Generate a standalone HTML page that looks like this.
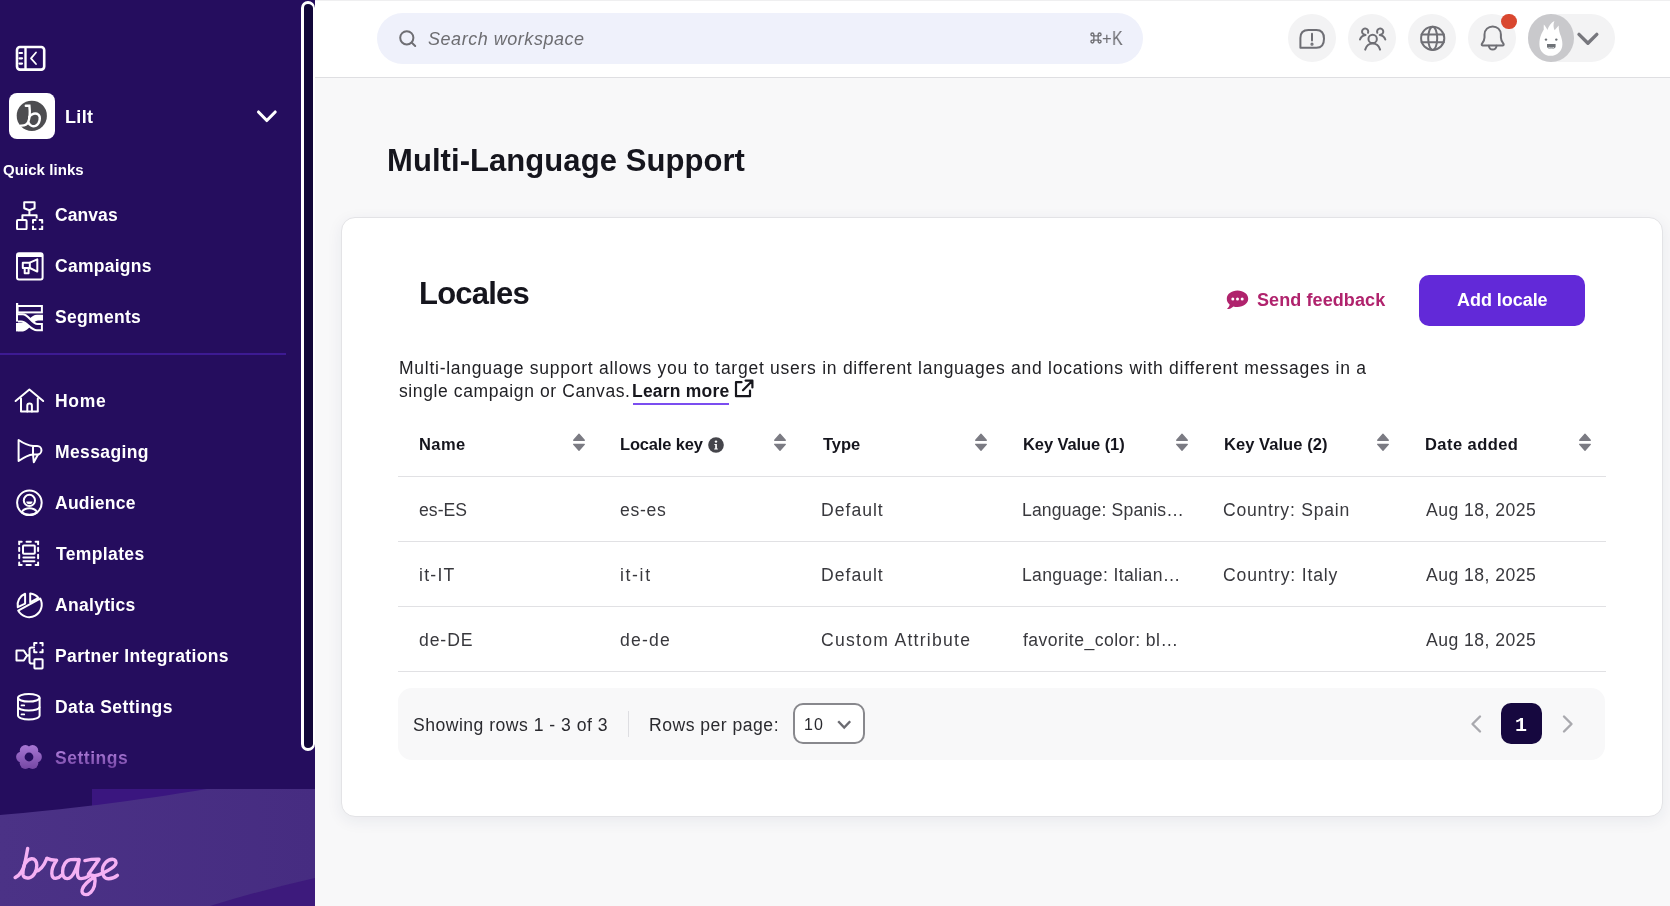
<!DOCTYPE html>
<html><head><meta charset="utf-8">
<style>
*{box-sizing:border-box;margin:0;padding:0}
html,body{width:1670px;height:906px;overflow:hidden;background:#f8f8f9;font-family:"Liberation Sans",sans-serif;position:relative}
.abs{position:absolute}
#sb{position:absolute;left:0;top:0;width:315px;height:906px;background:#250d5e;overflow:hidden}
.nav{position:absolute;left:55px;color:#fff;font-weight:700;font-size:17.5px;white-space:nowrap;line-height:1;letter-spacing:0.3px}
#hdr{position:absolute;left:315px;top:0;width:1355px;height:78px;background:#fff;border-top:1px solid #efeff0;border-bottom:1px solid #dfdfe2}
.txt{position:absolute;white-space:nowrap;line-height:1;-webkit-font-smoothing:antialiased;will-change:transform}
</style></head><body>
<div id="sb">
<!-- collapse icon -->
<svg class="abs" style="left:14px;top:44px" width="34" height="30" viewBox="0 0 34 30" fill="none" stroke="#fff">
 <rect x="3" y="3" width="27.2" height="22.6" rx="3" stroke-width="2.6"/>
 <line x1="11.5" y1="3" x2="11.5" y2="25.6" stroke-width="2.4"/>
 <line x1="5.5" y1="9" x2="8" y2="9" stroke-width="2.2" stroke-linecap="round"/>
 <line x1="5.5" y1="14.3" x2="8" y2="14.3" stroke-width="2.2" stroke-linecap="round"/>
 <line x1="5.5" y1="19.6" x2="8" y2="19.6" stroke-width="2.2" stroke-linecap="round"/>
 <path d="M22 8.5 L17 14.3 L22 20" stroke-width="1.8" stroke-linecap="round" stroke-linejoin="round"/>
</svg>
<!-- logo -->
<div class="abs" style="left:9px;top:93px;width:46px;height:46px;background:#fff;border-radius:8px"></div>
<svg class="abs" style="left:8px;top:92px" width="48" height="48" viewBox="0 0 48 48">
 <circle cx="23.8" cy="23.8" r="15.1" fill="#4d4d50"/>
 <path d="M17.8 13.8 H21.4 C22 19 21.8 26 20.2 30 C18.8 33 16 33.8 12.8 33.6" fill="none" stroke="#fff" stroke-width="2.4" stroke-linecap="round"/>
 <path d="M21.2 25 C23 21.5 27.8 20.6 30.4 22.6 C33 25 31.8 31.8 28 33.6 C24.8 35.2 21.5 33.5 20.4 30.5" fill="none" stroke="#fff" stroke-width="2.4" stroke-linecap="round"/>
</svg>
<svg class="abs" style="left:254px;top:106.5px" width="26" height="20" viewBox="0 0 26 20" fill="none" stroke="#fff" stroke-width="3.1" stroke-linecap="round" stroke-linejoin="round">
 <path d="M4.5 5 L12.8 13.5 L21.2 5"/>
</svg>

<!-- quick links -->
<svg class="abs" style="left:16px;top:201px" width="28" height="29" viewBox="0 0 28 29" fill="none" stroke="#fff" stroke-width="2" stroke-linejoin="round">
 <path d="M8.2 1.2 H18.6 V7.2 L13.4 9.2 L8.2 7.2 Z"/>
 <path d="M13.4 9.2 V14.3 M6.4 18.4 V14.3 H20.6 V17.6"/>
 <rect x="1" y="19" width="9.6" height="9.2" rx="1"/>
 <path d="M17 22.4 V19 H20.4 M22.8 19 H26.2 V22.4 M26.2 24.8 V28.2 H22.8 M20.4 28.2 H17 V24.8"/>
</svg>

<svg class="abs" style="left:15.5px;top:252px" width="28" height="29" viewBox="0 0 28 29" fill="none" stroke="#fff" stroke-width="2" stroke-linejoin="round">
 <rect x="1" y="1.2" width="25.6" height="26.2" rx="2"/>
 <line x1="1" y1="3.4" x2="26.6" y2="3.4" stroke-width="3.2"/>
 <rect x="6.8" y="10.7" width="7" height="5.3"/>
 <rect x="8.7" y="16" width="3.9" height="5.3"/>
 <path d="M13.8 10.7 L21.3 7.4 V19.6 L13.8 16"/>
</svg>

<svg class="abs" style="left:16px;top:303px" width="28" height="29" viewBox="0 0 28 29">
 <rect x="0" y="0" width="2.2" height="18.6" fill="#fff"/>
 <rect x="0" y="20" width="2.2" height="8.4" fill="#fff"/>
 <rect x="1.5" y="3" width="24.4" height="6.4" fill="none" stroke="#fff" stroke-width="2"/>
 <path d="M2 20 H6 C12 20 15 11.8 21 11.8 H27 V17.6 H22 C16.5 17.6 13 28.4 7 28.4 H2 Z" fill="#fff"/>
 <path d="M2 11.2 H6.5 C13 11.2 15.5 21 21.5 21 H25.9 V27.2 H21 C14 27.2 11.5 18.6 5 18.6 H2" fill="#250d5e" stroke="#fff" stroke-width="2"/>
</svg>

<div class="abs" style="left:0;top:353px;width:286px;height:2px;background:#3d1a93"></div>

<!-- main nav -->
<svg class="abs" style="left:14px;top:387px" width="32" height="28" viewBox="14 387 32 28" fill="none" stroke="#fff" stroke-width="2" stroke-linecap="round" stroke-linejoin="round">
 <path d="M15.6 401 L29.4 389.6 L43.2 401"/>
 <path d="M21 398.5 V411.6 H37.8 V398.5"/>
 <path d="M27.3 411.6 V405.8 A2.3 2.3 0 0 1 31.9 405.8 V411.6"/>
</svg>

<svg class="abs" style="left:14px;top:436px" width="32" height="30" viewBox="14 436 32 30" fill="none" stroke="#fff" stroke-width="2" stroke-linejoin="round">
 <path d="M18.6 440 V461 C23 458 27.5 455 33 454.5 V446 C27.5 445.5 23 443 18.6 440 Z"/>
 <path d="M33 446 H37.2 A4.2 4.2 0 0 1 37.2 454.5 H33"/>
 <path d="M33 454.5 L33.8 462.2 L38 454.5"/>
</svg>

<svg class="abs" style="left:14px;top:488px" width="32" height="30" viewBox="14 488 32 30" fill="none" stroke="#fff" stroke-width="2">
 <circle cx="29.4" cy="502.8" r="12.3"/>
 <circle cx="29.4" cy="500.4" r="5.6"/>
 <path d="M26.3 501.6 H32.5 A3.1 2.6 0 0 1 26.3 501.6 Z" fill="#fff" stroke="none"/>
 <path d="M21.6 512.4 C23 509.6 26 508.2 29.4 508.2 C32.8 508.2 35.8 509.6 37.2 512.4"/>
 <path d="M21.6 512.4 C24 514 26.5 514.8 29.4 514.8 C32.3 514.8 34.8 514 37.2 512.4"/>
</svg>

<svg class="abs" style="left:14px;top:538px" width="32" height="30" viewBox="14 538 32 30" fill="none" stroke="#fff" stroke-width="2" stroke-linecap="round">
 <path d="M19.2 544.2 V541.7 H21.7 M26.5 541.7 H30.8 M35.6 541.7 H38.1 V544.2 M38.1 547.8 V551 M38.1 554.8 V558.2 M38.1 562.4 V564.9 H35.6 M30.8 564.9 H26.5 M21.7 564.9 H19.2 V562.4 M19.2 558.2 V554.8 M19.2 551 V547.8"/>
 <rect x="23" y="545.4" width="11.8" height="8.4" rx="0.8"/>
 <path d="M23.4 557.6 H34.4 M23.4 561.2 H34.4"/>
</svg>

<svg class="abs" style="left:14px;top:590px" width="32" height="30" viewBox="14 590 32 30" fill="none" stroke="#fff" stroke-width="2" stroke-linejoin="round">
 <path d="M18.2 610.6 L40.2 598.6 A12 12 0 1 1 18.2 610.6 Z"/>
 <path d="M30.2 593.4 V602.4 L38.4 597.8 A11.8 11.8 0 0 0 30.2 593.4 Z"/>
 <path d="M25.1 593.8 V603.6 L17.8 607.2 A11.8 11.8 0 0 1 25.1 593.8 Z"/>
</svg>

<svg class="abs" style="left:14px;top:640px" width="32" height="32" viewBox="14 640 32 32" fill="none" stroke="#fff" stroke-width="2" stroke-linejoin="round" stroke-linecap="round">
 <path d="M16.5 650.6 H23.8 L27 655.5 L23.8 660.5 H16.5 Z"/>
 <path d="M27 655.5 H28.5 M34 647.5 H31.5 Q29.5 647.5 29.5 649.5 V661.5 Q29.5 663.6 31.5 663.6 H34"/>
 <path d="M34.2 645.4 V643 H36.6 M40.2 643 H42.6 V645.4 M42.6 649.8 V652.2 H40.2 M36.6 652.2 H34.2 V649.8"/>
 <rect x="34.4" y="659.2" width="8.2" height="9.2" rx="0.6"/>
</svg>

<svg class="abs" style="left:14px;top:690px" width="32" height="32" viewBox="14 690 32 32" fill="none" stroke="#fff" stroke-width="2">
 <ellipse cx="28.8" cy="697.8" rx="10.8" ry="3.8"/>
 <path d="M18 697.8 V715.6 C18 717.8 22.8 719.6 28.8 719.6 C34.8 719.6 39.6 717.8 39.6 715.6 V697.8"/>
 <path d="M18 706.8 C18 709 22.8 710.6 28.8 710.6 C34.8 710.6 39.6 709 39.6 706.8"/>
 <path d="M21.5 705.4 H24.2 M21.5 714.4 H24.2" stroke-linecap="round" stroke-width="1.8"/>
</svg>

<svg class="abs" style="left:15px;top:743.3px" width="28" height="28" viewBox="0 0 28 28">
 <defs><linearGradient id="gg" gradientUnits="userSpaceOnUse" x1="0" y1="2" x2="0" y2="26"><stop offset="0" stop-color="#a877d4"/><stop offset="1" stop-color="#7447a3"/></linearGradient>
 <mask id="gm"><rect width="28" height="28" fill="#fff"/><circle cx="14" cy="14" r="4.4" fill="#000"/></mask></defs>
 <g fill="url(#gg)" mask="url(#gm)"><circle cx="14" cy="14" r="9.5"/><circle cx="21.30" cy="14.00" r="5.6"/><circle cx="17.65" cy="20.32" r="5.6"/><circle cx="10.35" cy="20.32" r="5.6"/><circle cx="6.70" cy="14.00" r="5.6"/><circle cx="10.35" cy="7.68" r="5.6"/><circle cx="17.65" cy="7.68" r="5.6"/></g>
</svg>

<!-- bottom decoration -->
<svg class="abs" style="left:0;top:780px" width="315" height="126" viewBox="0 780 315 126">
 <defs><linearGradient id="band" x1="0" y1="0" x2="1" y2="0"><stop offset="0" stop-color="#4b3286"/><stop offset="1" stop-color="#462c81"/></linearGradient></defs>
 <path d="M92 789 H315 V906 H92 Z" fill="#3a167f"/>
 <path d="M0 815 C60 810 135 801 207 789 H315 V906 H0 Z" fill="url(#band)"/>
 <path d="M210 906 C245 895 280 886 315 878 V906 Z" fill="#3d1a7c"/>
</svg>
<svg class="abs" style="left:10px;top:840px" width="120" height="60" viewBox="10 840 120 60" fill="none" stroke="#f5b1f4" stroke-width="3.4" stroke-linecap="round" stroke-linejoin="round">
 <path d="M15.1 877.6 C19.6 875.4 23 870.5 24.6 864 C25.8 859 26.8 853 27.7 848.4"/>
 <path d="M25.4 861.6 C23.6 867 22.6 871.8 23 874.8 C23.5 877.4 26 878.4 29.4 877.8 C33.6 877 36.8 871.2 36.8 865.4 C36.8 860.8 34.6 858.6 31.6 858.8 C28.6 859 26.8 861 25.6 863"/>
 <path d="M35.8 871.4 C40 870.6 44 865.6 46.9 858.4"/>
 <path d="M46.9 858.4 C50 859.9 53.4 860.4 56.6 860.3 C53.6 864.6 51.6 869.2 51.8 873.6 C52 877 53.6 878.6 55.8 878.3 C58.2 878 60.6 876.4 62.2 874.6"/>
 <path d="M79.2 859.6 C76.5 859.4 73.6 859.4 70.7 859.6 C66 860 62.6 865.6 62.6 871.6 C62.6 876 64.4 878.6 67.2 878.6 C70.8 878.6 73.6 874 75.4 869.8 C77 866 78.4 862.4 79.2 859.6 C78 865 77.2 869.6 77.4 873.6 C77.6 877.4 79 878.8 81.2 878.6 C84 878.4 86.4 877.6 89 876"/>
 <path d="M84.9 860.6 C89.5 859.6 94.4 859 99 859.2 C95.5 864.4 91.6 869.6 88.4 874.2 C91 875.2 93 875.6 94.6 875.6 C97 875.6 99.5 874.8 101.8 873.6"/>
 <path d="M94.6 875.8 C95.2 879 95.4 882.6 94.4 886 C93 891 89.2 894.6 86 894.6 C83 894.6 81.4 892.4 82.2 889.6 C83.4 885.6 88 881 94.6 876.8"/>
 <path d="M101.8 873.6 C107.2 871 113 868.4 115.4 864.6 C116.8 862 115.4 859.2 112.4 859.2 C107.2 859.2 102.6 864.4 102.4 870.2 C102.2 875.6 104.6 878.8 108.6 878.8 C111.8 878.8 115 877.4 117.4 875.4"/>
</svg>
<!-- scrollbar -->
<div class="abs" style="left:301px;top:1px;width:14px;height:750px;background:#12073a;border:3px solid #fff;border-left-width:3px;border-right-width:2px;border-radius:7px"></div>
</div>
<div id="hdr"></div>
<!-- search -->
<div class="abs" style="left:377px;top:13px;width:766px;height:51px;border-radius:25.5px;background:#eff1fb"></div>
<svg class="abs" style="left:396px;top:26.5px" width="24" height="24" viewBox="396 27 24 24" fill="none" stroke="#6e6e73" stroke-width="2" stroke-linecap="round">
 <circle cx="406.8" cy="37.8" r="6.6"/>
 <path d="M411.6 42.6 L415.2 46"/>
</svg>
<svg class="abs" style="left:1089.7px;top:31.8px" width="12" height="12" viewBox="0 0 14 14" fill="none" stroke="#6e6e73" stroke-width="1.6">
 <path d="M4.5 4.5 H9.5 V9.5 H4.5 Z M4.5 4.5 V2.8 A1.7 1.7 0 1 0 2.8 4.5 H4.5 M9.5 4.5 H11.2 A1.7 1.7 0 1 0 9.5 2.8 V4.5 M9.5 9.5 V11.2 A1.7 1.7 0 1 0 11.2 9.5 H9.5 M4.5 9.5 H2.8 A1.7 1.7 0 1 0 4.5 11.2 V9.5"/>
</svg>

<!-- header icons -->
<div class="abs" style="left:1288px;top:14px;width:48px;height:48px;border-radius:50%;background:#f3f3f4"></div>
<div class="abs" style="left:1348px;top:14px;width:48px;height:48px;border-radius:50%;background:#f3f3f4"></div>
<div class="abs" style="left:1408px;top:14px;width:48px;height:48px;border-radius:50%;background:#f3f3f4"></div>
<div class="abs" style="left:1468px;top:14px;width:48px;height:48px;border-radius:50%;background:#f3f3f4"></div>
<div class="abs" style="left:1528px;top:14px;width:87px;height:48px;border-radius:24px;background:#f3f3f4"></div>
<svg class="abs" style="left:1280px;top:10px" width="340" height="60" viewBox="1280 10 340 60" fill="none" stroke="#6f6f75" stroke-width="2" stroke-linecap="round" stroke-linejoin="round">
 <!-- feedback bubble -->
 <path d="M1300.4 47.8 V38 C1300.4 33 1303.4 30 1308.4 30 H1316.4 C1321.4 30 1324 33 1324 38.8 C1324 44.6 1321.4 47.8 1316.4 47.8 Z"/>
 <path d="M1312 33.8 V40.4"/><circle cx="1312" cy="44.2" r="0.6" fill="#6f6f75"/>
 <!-- people -->
 <circle cx="1372.66" cy="38.9" r="4.2"/>
 <path d="M1365.2 49.6 C1366.4 45.8 1369.2 43.6 1372.66 43.6 C1376.1 43.6 1378.9 45.8 1380.1 49.6"/>
  <path d="M1368 32.8 A3.1 3.1 0 1 0 1365.1 34.7 M1365.6 34.9 C1362.8 35.2 1360.7 37 1360 39.6"/>
 <path d="M1377.32 32.8 A3.1 3.1 0 1 1 1380.22 34.7 M1379.72 34.9 C1382.5 35.2 1384.6 37 1385.3 39.6"/>
 <!-- globe -->
 <circle cx="1432.7" cy="38.3" r="11.6"/>
 <ellipse cx="1432.7" cy="38.3" rx="4.5" ry="11.6"/>
 <path d="M1421.6 34.4 H1443.8 M1421.6 42.2 H1443.8"/>
 <!-- bell -->
 <path d="M1482.6 45.4 H1502.8 C1503.8 45.4 1504 44.4 1503.2 43.4 C1501.8 41.6 1500.9 40 1500.9 37.6 V34.6 C1500.9 29.6 1497.1 26.4 1492.7 26.4 C1488.3 26.4 1484.5 29.6 1484.5 34.6 V37.6 C1484.5 40 1483.6 41.6 1482.2 43.4 C1481.4 44.4 1481.6 45.4 1482.6 45.4 Z"/>
 <path d="M1488.9 45.8 A3.8 3.8 0 0 0 1496.5 45.8"/>
</svg>
<div class="abs" style="left:1501px;top:13.5px;width:15.5px;height:15.5px;border-radius:50%;background:#d9472f"></div>
<div class="abs" style="left:1528px;top:14px;width:45.5px;height:48px;border-radius:50%;background:#c9c9cc"></div>
<svg class="abs" style="left:1528px;top:14px" width="90" height="48" viewBox="1528 14 90 48">
 <path d="M1550.5 55.8 C1544 55.8 1539.4 51 1539.4 44.2 C1539.4 37.5 1541.6 33.5 1543.8 29.6 C1543.6 27.5 1543.8 25.8 1543.8 24.6 C1545.4 26.4 1546.6 28 1547.4 30 C1548.6 26 1551 22.6 1554.4 20.9 C1553 24 1553.4 27.6 1554.6 30.2 C1556 28.6 1557.6 27 1558.7 25.5 C1558.8 28.5 1559 31 1560 34 C1561.6 37.5 1562.4 41 1562.4 44.2 C1562.4 51 1557 55.8 1550.5 55.8 Z" fill="#fff"/>
 <circle cx="1546" cy="39.6" r="1.2" fill="#6f7378"/><circle cx="1556.3" cy="39.6" r="1.2" fill="#6f7378"/>
 <path d="M1547 44 H1555.6 V46.4 C1555.6 48 1554 48.8 1551.3 48.8 C1548.6 48.8 1547 48 1547 46.4 Z" fill="#6f7378"/>
 <path d="M1548.6 47.4 C1549.6 48.4 1553 48.4 1554 47.4" stroke="#d8dbdd" stroke-width="1.2" fill="none"/>
 <path d="M1579 34.4 L1587.9 43.2 L1596.8 34.4" fill="none" stroke="#77777d" stroke-width="3.4" stroke-linecap="round" stroke-linejoin="round"/>
</svg>

<!-- title -->

<!-- card -->
<div class="abs" style="left:341px;top:217px;width:1321.5px;height:599.5px;background:#fff;border:1px solid #e3e3e6;border-radius:14px;box-shadow:0 4px 16px rgba(30,40,90,0.07)"></div>

<svg class="abs" style="left:1225px;top:288px" width="26" height="24" viewBox="0 0 26 24">
 <path d="M12.5 2.6 C18.6 2.6 23.2 6.2 23.2 10.8 C23.2 15.4 18.6 19 12.5 19 C11 19 9.6 18.8 8.4 18.4 C6.6 20.2 4 21.2 2 21 C3.6 19.6 4.4 18.2 4.6 16.6 C2.8 15.1 1.8 13.1 1.8 10.8 C1.8 6.2 6.4 2.6 12.5 2.6 Z" fill="#b0236d"/>
 <circle cx="7.8" cy="10.9" r="1.5" fill="#fff"/><circle cx="12.5" cy="10.9" r="1.5" fill="#fff"/><circle cx="17.2" cy="10.9" r="1.5" fill="#fff"/>
</svg>
<div class="abs" style="left:1419px;top:274.5px;width:166px;height:51px;border-radius:10px;background:#6229d8"></div>

<div class="abs" style="left:633px;top:402.6px;width:96px;height:2px;background:#7b4df0"></div>
<svg class="abs" style="left:732px;top:377px" width="24" height="24" viewBox="0 0 24 24" fill="none" stroke="#17171d" stroke-width="2.2" stroke-linecap="round" stroke-linejoin="round">
 <path d="M9.5 5.2 H4 V19.2 H18 V13.6"/>
 <path d="M11 13.2 L19.6 4.4 M13.6 3.6 H20.4 V10.4"/>
</svg>
<div class="abs" style="left:398px;top:476px;width:1208px;height:1px;background:#e1e1e4"></div>
<div class="abs" style="left:398px;top:541px;width:1208px;height:1px;background:#e1e1e4"></div>
<div class="abs" style="left:398px;top:606px;width:1208px;height:1px;background:#e1e1e4"></div>
<div class="abs" style="left:398px;top:671px;width:1208px;height:1px;background:#e1e1e4"></div>
<svg class="abs" style="left:572.5px;top:433px" width="13" height="19" viewBox="0 0 13 19"><path d="M6 1.3 L11.3 7.3 H0.7 Z M0.7 11.3 H11.3 L6 17.3 Z" fill="#7b7b83" stroke="#7b7b83" stroke-width="1.3" stroke-linejoin="round"/></svg>
<svg class="abs" style="left:773.7px;top:433px" width="13" height="19" viewBox="0 0 13 19"><path d="M6 1.3 L11.3 7.3 H0.7 Z M0.7 11.3 H11.3 L6 17.3 Z" fill="#7b7b83" stroke="#7b7b83" stroke-width="1.3" stroke-linejoin="round"/></svg>
<svg class="abs" style="left:974.9px;top:433px" width="13" height="19" viewBox="0 0 13 19"><path d="M6 1.3 L11.3 7.3 H0.7 Z M0.7 11.3 H11.3 L6 17.3 Z" fill="#7b7b83" stroke="#7b7b83" stroke-width="1.3" stroke-linejoin="round"/></svg>
<svg class="abs" style="left:1176.1px;top:433px" width="13" height="19" viewBox="0 0 13 19"><path d="M6 1.3 L11.3 7.3 H0.7 Z M0.7 11.3 H11.3 L6 17.3 Z" fill="#7b7b83" stroke="#7b7b83" stroke-width="1.3" stroke-linejoin="round"/></svg>
<svg class="abs" style="left:1377.3px;top:433px" width="13" height="19" viewBox="0 0 13 19"><path d="M6 1.3 L11.3 7.3 H0.7 Z M0.7 11.3 H11.3 L6 17.3 Z" fill="#7b7b83" stroke="#7b7b83" stroke-width="1.3" stroke-linejoin="round"/></svg>
<svg class="abs" style="left:1578.5px;top:433px" width="13" height="19" viewBox="0 0 13 19"><path d="M6 1.3 L11.3 7.3 H0.7 Z M0.7 11.3 H11.3 L6 17.3 Z" fill="#7b7b83" stroke="#7b7b83" stroke-width="1.3" stroke-linejoin="round"/></svg>
<svg class="abs" style="left:708px;top:437px" width="16" height="16" viewBox="0 0 16 16"><circle cx="8" cy="8" r="7.8" fill="#45454b"/><circle cx="8" cy="4.6" r="1.2" fill="#fff"/><path d="M6.4 7 H8.9 V11.6 H9.8 V12.6 H6.2 V11.6 H7.2 V8 H6.4 Z" fill="#fff"/></svg>

<div class="abs" style="left:398px;top:688px;width:1207px;height:72px;border-radius:14px;background:#f8f8f9"></div>
<div class="abs" style="left:627.5px;top:711px;width:1.5px;height:26px;background:#dedee2"></div>
<div class="abs" style="left:793px;top:703px;width:71.5px;height:41px;border-radius:10px;border:2px solid #88888d;background:#fff"></div>
<svg class="abs" style="left:834px;top:716.5px" width="20" height="16" viewBox="0 0 20 16" fill="none" stroke="#6b6b71" stroke-width="2.4" stroke-linecap="butt" stroke-linejoin="miter"><path d="M4.2 4.2 L10.2 10.6 L16.2 4.2"/></svg>
<svg class="abs" style="left:1466px;top:712px" width="20" height="24" viewBox="0 0 20 24" fill="none" stroke="#a9a9ae" stroke-width="2.4" stroke-linecap="round" stroke-linejoin="round"><path d="M14 4.5 L6.5 12 L14 19.5"/></svg>
<div class="abs" style="left:1501px;top:703px;width:41px;height:41px;border-radius:10px;background:#16083f"></div>
<svg class="abs" style="left:1558px;top:712px" width="20" height="24" viewBox="0 0 20 24" fill="none" stroke="#a9a9ae" stroke-width="2.4" stroke-linecap="round" stroke-linejoin="round"><path d="M6 4.5 L13.5 12 L6 19.5"/></svg>
<div class="txt" style="left:64.6px;top:108px;font-family:'Liberation Sans';font-size:18px;font-weight:700;color:#fff;letter-spacing:0.366px;font-style:normal;">Lilt</div>
<div class="txt" style="left:3.2px;top:162px;font-family:'Liberation Sans';font-size:15px;font-weight:700;color:#fff;letter-spacing:0.060px;font-style:normal;">Quick links</div>
<div class="txt" style="left:54.6px;top:207px;font-family:'Liberation Sans';font-size:17.5px;font-weight:700;color:#fff;letter-spacing:0.080px;font-style:normal;">Canvas</div>
<div class="txt" style="left:54.6px;top:258px;font-family:'Liberation Sans';font-size:17.5px;font-weight:700;color:#fff;letter-spacing:0.264px;font-style:normal;">Campaigns</div>
<div class="txt" style="left:54.6px;top:309px;font-family:'Liberation Sans';font-size:17.5px;font-weight:700;color:#fff;letter-spacing:0.314px;font-style:normal;">Segments</div>
<div class="txt" style="left:54.5px;top:393px;font-family:'Liberation Sans';font-size:17.5px;font-weight:700;color:#fff;letter-spacing:0.733px;font-style:normal;">Home</div>
<div class="txt" style="left:54.5px;top:444px;font-family:'Liberation Sans';font-size:17.5px;font-weight:700;color:#fff;letter-spacing:0.375px;font-style:normal;">Messaging</div>
<div class="txt" style="left:54.5px;top:495px;font-family:'Liberation Sans';font-size:17.5px;font-weight:700;color:#fff;letter-spacing:0.243px;font-style:normal;">Audience</div>
<div class="txt" style="left:55.5px;top:546px;font-family:'Liberation Sans';font-size:17.5px;font-weight:700;color:#fff;letter-spacing:0.361px;font-style:normal;">Templates</div>
<div class="txt" style="left:54.5px;top:597px;font-family:'Liberation Sans';font-size:17.5px;font-weight:700;color:#fff;letter-spacing:0.312px;font-style:normal;">Analytics</div>
<div class="txt" style="left:54.5px;top:648px;font-family:'Liberation Sans';font-size:17.5px;font-weight:700;color:#fff;letter-spacing:0.384px;font-style:normal;">Partner Integrations</div>
<div class="txt" style="left:54.5px;top:699px;font-family:'Liberation Sans';font-size:17.5px;font-weight:700;color:#fff;letter-spacing:0.467px;font-style:normal;">Data Settings</div>
<div class="txt" style="left:54.5px;top:750px;font-family:'Liberation Sans';font-size:17.5px;font-weight:700;color:#8a5cbf;letter-spacing:0.529px;font-style:normal;background:linear-gradient(180deg,#a877d4 15%,#7648a6 95%);-webkit-background-clip:text;background-clip:text;color:transparent;">Settings</div>
<div class="txt" style="left:427.5px;top:30px;font-family:'Liberation Sans';font-size:18px;font-weight:400;color:#6d6d71;letter-spacing:0.533px;font-style:italic;">Search workspace</div>
<div class="txt" style="left:1102.2px;top:30px;font-family:'Liberation Sans';font-size:16.5px;font-weight:400;color:#6e6e73;letter-spacing:0.000px;font-style:normal;">+</div>
<div class="txt" style="left:1111.8px;top:29px;font-family:'Liberation Sans';font-size:19.5px;font-weight:400;color:#6e6e73;letter-spacing:0.000px;font-style:normal;transform:scaleX(0.82);transform-origin:0 0;">K</div>
<div class="txt" style="left:387.2px;top:145px;font-family:'Liberation Sans';font-size:31px;font-weight:700;color:#15151d;letter-spacing:0.066px;font-style:normal;">Multi-Language Support</div>
<div class="txt" style="left:419.0px;top:278px;font-family:'Liberation Sans';font-size:31px;font-weight:700;color:#15151d;letter-spacing:-0.800px;font-style:normal;">Locales</div>
<div class="txt" style="left:1257.3px;top:291px;font-family:'Liberation Sans';font-size:18px;font-weight:700;color:#b0236d;letter-spacing:0.091px;font-style:normal;">Send feedback</div>
<div class="txt" style="left:1456.5px;top:291px;font-family:'Liberation Sans';font-size:18px;font-weight:700;color:#fff;letter-spacing:-0.045px;font-style:normal;">Add locale</div>
<div class="txt" style="left:398.7px;top:360px;font-family:'Liberation Sans';font-size:17.5px;font-weight:400;color:#212125;letter-spacing:0.740px;font-style:normal;">Multi-language support allows you to target users in different languages and locations with different messages in a</div>
<div class="txt" style="left:398.8px;top:383px;font-family:'Liberation Sans';font-size:17.5px;font-weight:400;color:#212125;letter-spacing:0.600px;font-style:normal;">single campaign or Canvas.</div>
<div class="txt" style="left:632.2px;top:383px;font-family:'Liberation Sans';font-size:17.5px;font-weight:700;color:#17171d;letter-spacing:0.201px;font-style:normal;">Learn more</div>
<div class="txt" style="left:419.2px;top:436px;font-family:'Liberation Sans';font-size:16.5px;font-weight:700;color:#15151d;letter-spacing:0.433px;font-style:normal;">Name</div>
<div class="txt" style="left:620.4px;top:436px;font-family:'Liberation Sans';font-size:16.5px;font-weight:700;color:#15151d;letter-spacing:-0.167px;font-style:normal;">Locale key</div>
<div class="txt" style="left:822.6px;top:436px;font-family:'Liberation Sans';font-size:16.5px;font-weight:700;color:#15151d;letter-spacing:-0.066px;font-style:normal;">Type</div>
<div class="txt" style="left:1022.8px;top:436px;font-family:'Liberation Sans';font-size:16.5px;font-weight:700;color:#15151d;letter-spacing:-0.091px;font-style:normal;">Key Value (1)</div>
<div class="txt" style="left:1224.0px;top:436px;font-family:'Liberation Sans';font-size:16.5px;font-weight:700;color:#15151d;letter-spacing:0.059px;font-style:normal;">Key Value (2)</div>
<div class="txt" style="left:1425.2px;top:436px;font-family:'Liberation Sans';font-size:16.5px;font-weight:700;color:#15151d;letter-spacing:0.444px;font-style:normal;">Date added</div>
<div class="txt" style="left:418.5px;top:502px;font-family:'Liberation Sans';font-size:17.6px;font-weight:400;color:#38383d;letter-spacing:0.025px;font-style:normal;">es-ES</div>
<div class="txt" style="left:619.7px;top:502px;font-family:'Liberation Sans';font-size:17.6px;font-weight:400;color:#38383d;letter-spacing:0.675px;font-style:normal;">es-es</div>
<div class="txt" style="left:820.9px;top:502px;font-family:'Liberation Sans';font-size:17.6px;font-weight:400;color:#38383d;letter-spacing:1.000px;font-style:normal;">Default</div>
<div class="txt" style="left:1022.1px;top:502px;font-family:'Liberation Sans';font-size:17.6px;font-weight:400;color:#38383d;letter-spacing:0.151px;font-style:normal;">Language: Spanis…</div>
<div class="txt" style="left:1223.3px;top:502px;font-family:'Liberation Sans';font-size:17.6px;font-weight:400;color:#38383d;letter-spacing:0.761px;font-style:normal;">Country: Spain</div>
<div class="txt" style="left:1425.5px;top:502px;font-family:'Liberation Sans';font-size:17.6px;font-weight:400;color:#38383d;letter-spacing:0.455px;font-style:normal;">Aug 18, 2025</div>
<div class="txt" style="left:418.5px;top:567px;font-family:'Liberation Sans';font-size:17.6px;font-weight:400;color:#38383d;letter-spacing:1.250px;font-style:normal;">it-IT</div>
<div class="txt" style="left:619.7px;top:567px;font-family:'Liberation Sans';font-size:17.6px;font-weight:400;color:#38383d;letter-spacing:1.650px;font-style:normal;">it-it</div>
<div class="txt" style="left:820.9px;top:567px;font-family:'Liberation Sans';font-size:17.6px;font-weight:400;color:#38383d;letter-spacing:1.000px;font-style:normal;">Default</div>
<div class="txt" style="left:1022.1px;top:567px;font-family:'Liberation Sans';font-size:17.6px;font-weight:400;color:#38383d;letter-spacing:0.340px;font-style:normal;">Language: Italian…</div>
<div class="txt" style="left:1223.3px;top:567px;font-family:'Liberation Sans';font-size:17.6px;font-weight:400;color:#38383d;letter-spacing:0.822px;font-style:normal;">Country: Italy</div>
<div class="txt" style="left:1425.5px;top:567px;font-family:'Liberation Sans';font-size:17.6px;font-weight:400;color:#38383d;letter-spacing:0.455px;font-style:normal;">Aug 18, 2025</div>
<div class="txt" style="left:418.5px;top:632px;font-family:'Liberation Sans';font-size:17.6px;font-weight:400;color:#38383d;letter-spacing:0.900px;font-style:normal;">de-DE</div>
<div class="txt" style="left:619.7px;top:632px;font-family:'Liberation Sans';font-size:17.6px;font-weight:400;color:#38383d;letter-spacing:1.200px;font-style:normal;">de-de</div>
<div class="txt" style="left:820.9px;top:632px;font-family:'Liberation Sans';font-size:17.6px;font-weight:400;color:#38383d;letter-spacing:1.267px;font-style:normal;">Custom Attribute</div>
<div class="txt" style="left:1023.1px;top:632px;font-family:'Liberation Sans';font-size:17.6px;font-weight:400;color:#38383d;letter-spacing:0.467px;font-style:normal;">favorite_color: bl…</div>
<div class="txt" style="left:1425.5px;top:632px;font-family:'Liberation Sans';font-size:17.6px;font-weight:400;color:#38383d;letter-spacing:0.455px;font-style:normal;">Aug 18, 2025</div>
<div class="txt" style="left:413.1px;top:717px;font-family:'Liberation Sans';font-size:17.6px;font-weight:400;color:#2a2a2f;letter-spacing:0.482px;font-style:normal;">Showing rows 1 - 3 of 3</div>
<div class="txt" style="left:649.0px;top:717px;font-family:'Liberation Sans';font-size:17.6px;font-weight:400;color:#2a2a2f;letter-spacing:0.485px;font-style:normal;">Rows per page:</div>
<div class="txt" style="left:804.4px;top:717px;font-family:'Liberation Sans';font-size:16px;font-weight:400;color:#2a2a2f;letter-spacing:1.200px;font-style:normal;">10</div>
<div class="txt" style="left:1515.0px;top:716px;font-family:'Liberation Mono';font-size:20px;font-weight:700;color:#fff;letter-spacing:0.000px;font-style:normal;">1</div>
</body></html>
